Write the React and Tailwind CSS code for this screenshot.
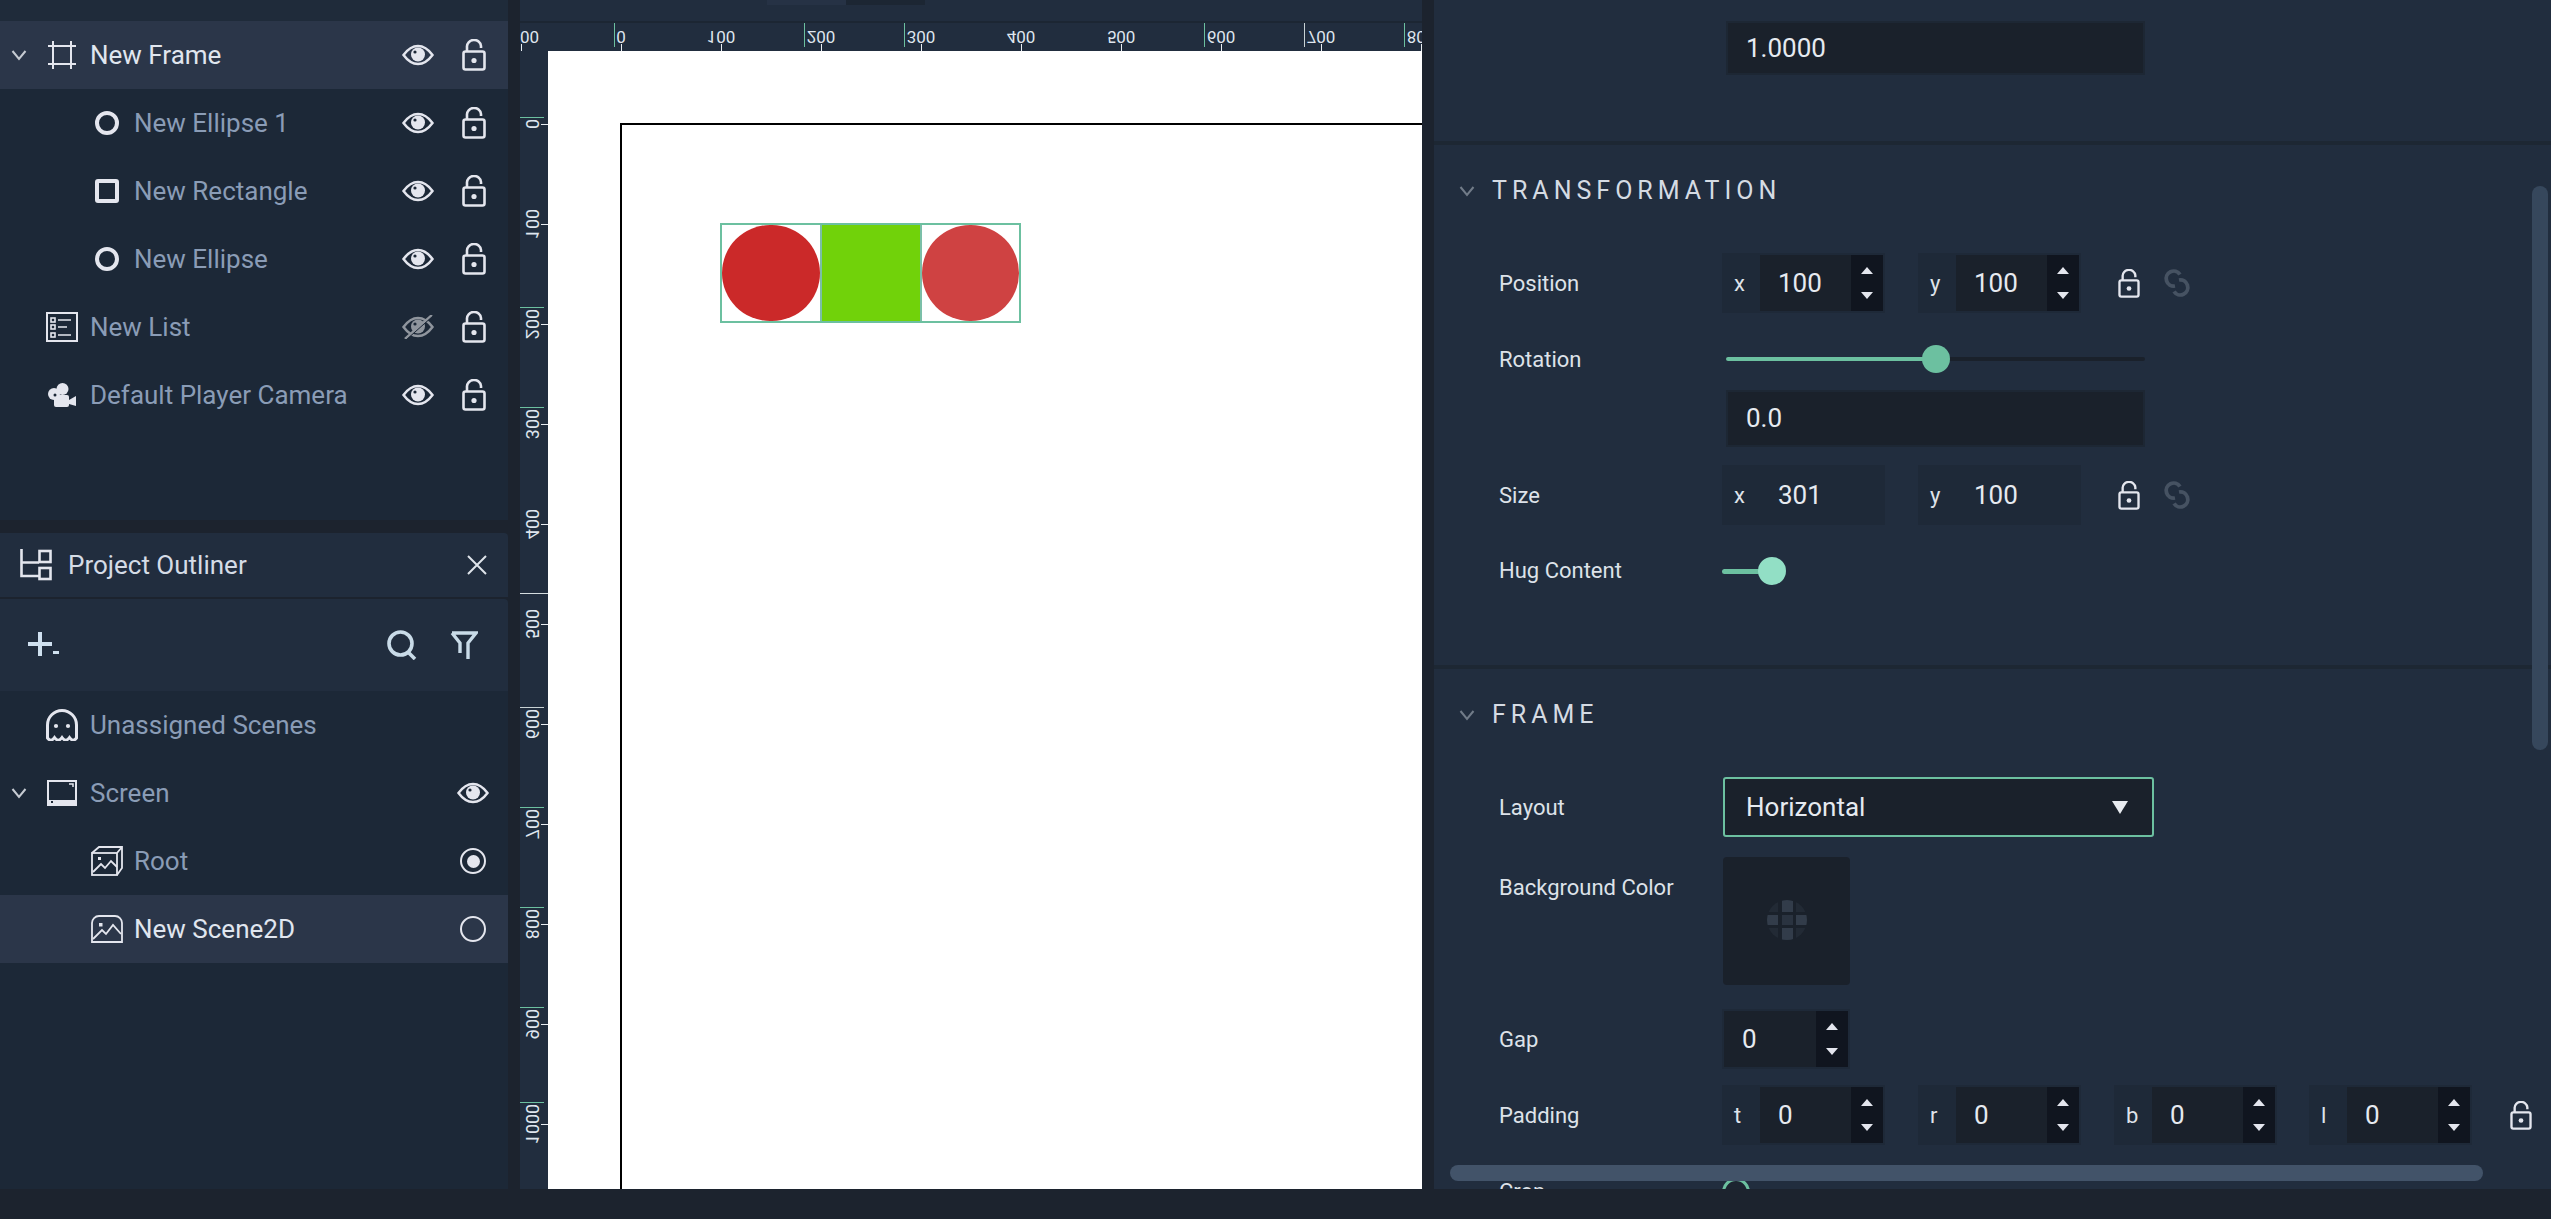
import React from 'react';

const FONT = "font-['Roboto','Noto_Sans',sans-serif]";

const Eye = ({ off }) => (
    <svg width="32" height="24" viewBox="0 0 32 24" fill="none" className={off ? 'text-[#8f959d]' : 'text-[#e4e6ee]'}>
        <path d="M1.5 12 C7 4.5 12 3 16 3 C20 3 25 4.5 30.5 12 C25 19.5 20 21 16 21 C12 21 7 19.5 1.5 12 Z" stroke="currentColor" strokeWidth="2.5" />
        <circle cx="16" cy="11.5" r="7" fill="currentColor" />
        <circle cx="13" cy="9" r="1.6" fill="#1c2837" />
        {off && <path d="M3 24 L30 0" stroke="currentColor" strokeWidth="2.5" />}
        {off && <path d="M4 25 L31 1" stroke="#1c2837" strokeWidth="1" />}
    </svg>
);

const Lock = ({ w = 24, h = 32 }) => (
    <svg width={w} height={h} viewBox="0 0 24 32" fill="none" className="text-[#e4e6ee] shrink-0">
        <rect x="1.5" y="12.5" width="21" height="18" rx="2" stroke="currentColor" strokeWidth="2.6" />
        <circle cx="12" cy="21.5" r="2.6" fill="currentColor" />
        <path d="M5 12 V8 A7 6.5 0 0 1 19 7 V9" stroke="currentColor" strokeWidth="2.6" />
    </svg>
);

const LinkIcon = () => (
    <svg width="28" height="30" viewBox="0 0 28 30" fill="none" className="text-[#465262] shrink-0 ml-[23px]">
        <path d="M17 6.5 A7.5 7.5 0 1 0 12 18" stroke="currentColor" strokeWidth="3.8" />
        <path d="M11 23.5 A7.5 7.5 0 1 0 16 12" stroke="currentColor" strokeWidth="3.8" />
    </svg>
);

const Chevron = ({ className }) => (
    <svg width="16" height="12" viewBox="0 0 16 12" fill="none" className={className}>
        <path d="M1.5 2 L8 10 L14.5 2" stroke="currentColor" strokeWidth="2" />
    </svg>
);

const FrameIcon = () => (
    <svg width="28" height="28" viewBox="0 0 28 28" fill="none" stroke="#e4e6ee" strokeWidth="2">
        <path d="M0 5 H28 M0 23 H28 M5 0 V28 M23 0 V28" />
    </svg>
);

const CircleIcon = () => <div className="w-[24px] h-[24px] rounded-full border-[4px] border-[#e4e6ee]" />;
const SquareIcon = () => <div className="w-[24px] h-[24px] rounded-[3px] border-[4px] border-[#e4e6ee]" />;

const ListIcon = () => (
    <svg width="32" height="30" viewBox="0 0 32 30" fill="none" stroke="#e4e6ee" strokeWidth="1.6">
        <rect x="1" y="1" width="30" height="28" strokeWidth="2" />
        <rect x="5" y="6" width="4" height="4" />
        <rect x="5" y="13" width="4" height="4" />
        <rect x="5" y="21" width="4" height="4" />
        <path d="M12 8 H25 M12 15 H21 M12 23 H25" />
    </svg>
);

const CameraIcon = () => (
    <svg width="28" height="24" viewBox="0 0 28 24" fill="#e4e6ee">
        <circle cx="6" cy="11" r="6" />
        <circle cx="14.5" cy="6" r="6" />
        <rect x="6" y="12" width="15" height="12" rx="2" />
        <path d="M21 17 L28 13 V23 L21 21 Z" />
        <circle cx="7" cy="12" r="1.5" fill="#1c2837" />
    </svg>
);

const GhostIcon = () => (
    <svg width="32" height="32" viewBox="0 0 32 32" fill="none" stroke="#e4e6ee" strokeWidth="3">
        <path d="M1.5 29 V16 A14.5 14.5 0 0 1 30.5 16 V29 C28 32 26 32 23.5 28.5 C21 32 18.5 32 16 28.5 C13.5 32 11 32 8.5 28.5 C6 32 4 32 1.5 29 Z" />
        <circle cx="10" cy="17" r="2.1" fill="#e4e6ee" stroke="none" />
        <circle cx="22" cy="17" r="2.1" fill="#e4e6ee" stroke="none" />
    </svg>
);

const ScreenIcon = () => (
    <svg width="30" height="26" viewBox="0 0 30 26" fill="none">
        <rect x="1" y="1" width="28" height="24" stroke="#e4e6ee" strokeWidth="2" />
        <rect x="1" y="20" width="28" height="5" fill="#e4e6ee" />
        <rect x="4" y="21" width="2" height="2" fill="#1c2837" />
        <path d="M22 4 H26 V7" stroke="#e4e6ee" strokeWidth="1.5" />
    </svg>
);

const RootIcon = () => (
    <svg width="32" height="30" viewBox="0 0 32 30" fill="none" stroke="#e4e6ee" strokeWidth="1.8">
        <rect x="1" y="7" width="25" height="22" />
        <path d="M1 7 L8 1 H31 V22 L26 29 M26 7 L31 1" />
        <path d="M2 26 L10 18 L14 22 L20 15 L26 21" />
        <rect x="7" y="11" width="3" height="3" fill="#e4e6ee" stroke="none" />
    </svg>
);

const SceneIcon = () => (
    <svg width="32" height="28" viewBox="0 0 32 28" fill="none" stroke="#e4e6ee" strokeWidth="1.8">
        <path d="M1 27 V8 A7 7 0 0 1 8 1 H24 A7 7 0 0 1 31 8 V27 Z" />
        <path d="M2 24 L11 15 L15 19 L22 10 L30 19" />
        <rect x="8" y="8" width="3.5" height="3.5" fill="#e4e6ee" stroke="none" />
    </svg>
);

const OutlinerIcon = () => (
    <svg width="32" height="32" viewBox="0 0 32 32" fill="none" stroke="#e4e6ee" strokeWidth="2.6">
        <path d="M1.5 0 V27 H19 M1.5 13.5 H19" />
        <rect x="19.5" y="2" width="11" height="11" />
        <rect x="19.5" y="19" width="11" height="11" />
    </svg>
);

const PlusIcon = () => (
    <svg width="32" height="26" viewBox="0 0 32 26" fill="#cfe0ef">
        <rect x="10" y="0" width="4" height="24" />
        <rect x="0" y="10" width="24" height="4" />
        <rect x="25" y="19" width="6" height="3" />
    </svg>
);

const SearchIcon = () => (
    <svg width="30" height="30" viewBox="0 0 30 30" fill="none" stroke="#c9dbe8" strokeWidth="3.6">
        <circle cx="13.5" cy="13.5" r="11.5" />
        <path d="M21 22 L28 29" />
    </svg>
);

const FilterIcon = () => (
    <svg width="28" height="28" viewBox="0 0 28 28" fill="none" stroke="#c9dbe8" strokeWidth="3.4">
        <path d="M2 2 H26 L18 12 V28 M2 2 L10 12 V22 M2 2" />
    </svg>
);

const TreeRow = ({ icon, label, depth = 0, open, selected, right }) => (
    <div className={`h-[68px] flex items-center text-[26px] ${selected ? 'bg-[#2b3649] text-[#e0e6ef]' : 'text-[#8a9cb6]'}`}>
        <div className="w-[46px] flex pl-[11px] shrink-0">
            {open && <Chevron className="text-[#c6cbd2]" />}
        </div>
        <div className={`flex items-center justify-center shrink-0 ${depth ? 'w-[33px] ml-[44px]' : 'w-[32px]'}`}>{icon}</div>
        <span className={depth ? 'ml-[11px]' : 'ml-[12px]'}>{label}</span>
        <div className="ml-auto flex items-center">{right}</div>
    </div>
);

const LayerActions = ({ off }) => (
    <div className="flex items-center pr-[22px] gap-[28px]">
        <Eye off={off} />
        <Lock />
    </div>
);

const RightSlot = ({ children }) => <div className="w-[68px] pr-[2px] flex justify-center">{children}</div>;

const TopRuler = () => {
    const labels = ['0', '100', '200', '300', '400', '500', '600', '700', '800'];
    const guides = [94, 284, 384, 684, 784, 884];
    return (
        <div className="relative h-[28px] bg-[#212d3e] overflow-hidden">
            {labels.map((t, i) => (
                <React.Fragment key={t}>
                    <span className="absolute top-[4px] -translate-x-1/2 -scale-y-100 text-[17px] leading-[20px] text-[#dfe5ee]" style={{ left: 101 + i * 100 }}>{t}</span>
                    <div className="absolute top-[21px] h-[7px] w-[1px] bg-[#e8edf2]" style={{ left: 101 + i * 100 }} />
                </React.Fragment>
            ))}
            <span className="absolute left-0 top-[4px] -scale-y-100 text-[17px] leading-[20px] text-[#dfe5ee]">00</span>
            <div className="absolute left-[1px] top-[21px] h-[7px] w-[1px] bg-[#e8edf2]" />
            {guides.map((x) => (
                <div key={x} className={`absolute top-0 h-[24px] w-[1px] ${x === 784 ? 'bg-[#c8d2d4]' : 'bg-[#6cc0a0]'}`} style={{ left: x }} />
            ))}
        </div>
    );
};

const SideRuler = () => {
    const labels = ['0', '100', '200', '300', '400', '500', '600', '700', '800', '900', '1000'];
    const guides = [66, 256, 356, 656, 756, 856, 956, 1051];
    return (
        <div className="relative w-[28px] bg-[#212d3e] overflow-hidden shrink-0">
            {labels.map((t, i) => (
                <React.Fragment key={t}>
                    <span className="absolute left-[12px] -translate-x-1/2 -translate-y-1/2 -rotate-90 -scale-y-100 text-[18px] leading-[20px] text-[#dfe5ee]" style={{ top: 73 + i * 100 }}>{t}</span>
                    <div className="absolute left-[21px] h-[1px] w-[7px] bg-[#e8edf2]" style={{ top: 73 + i * 100 }} />
                </React.Fragment>
            ))}
            {guides.map((y) => (
                <div key={y} className={`absolute left-0 h-[1px] w-[24px] ${y === 656 ? 'bg-[#c8d2d4]' : 'bg-[#6cc0a0]'}`} style={{ top: y }} />
            ))}
            <div className="absolute left-0 top-[542px] h-[1px] w-[28px] bg-[#d5dde0]" />
        </div>
    );
};

const Spinner = () => (
    <div className="w-[32px] bg-[#10151f] flex flex-col items-center justify-between py-[12px] shrink-0">
        <div className="w-0 h-0 border-x-[6px] border-x-transparent border-b-[7px] border-b-[#e4e6ee]" />
        <div className="w-0 h-0 border-x-[6px] border-x-transparent border-t-[7px] border-t-[#e4e6ee]" />
    </div>
);

const NumField = ({ prefix, value, spin = true, className = '' }) => (
    <div className={`h-[60px] w-[163px] bg-[#1e2938] flex p-[2px] shrink-0 text-[26px] text-[#e6eaf0] ${className}`}>
        {prefix && <div className="w-[36px] pl-[10px] flex items-center text-[22px] text-[#dfe3ea] shrink-0">{prefix}</div>}
        <div className={`flex-1 flex items-center pl-[18px] ${spin ? 'bg-[#1a212b]' : ''}`}>{value}</div>
        {spin && <Spinner />}
    </div>
);

const WideInput = ({ value, className = '' }) => (
    <div className={`w-[419px] bg-[#1a212b] border-2 border-[#1d2734] flex items-center pl-[18px] text-[26px] text-[#e6eaf0] ${className}`}>{value}</div>
);

const PropRow = ({ label, children, className = '', labelClassName = '' }) => (
    <div className={`flex items-center pl-[65px] ${className}`}>
        <div className={`w-[223px] text-[22px] text-[#dde2e9] shrink-0 ${labelClassName}`}>{label}</div>
        {children}
    </div>
);

const SectionTitle = ({ title, className = '' }) => (
    <div className={`h-[30px] flex items-center pl-[25px] ${className}`}>
        <Chevron className="text-[#717b88] shrink-0" />
        <span className="ml-[17px] text-[25px] tracking-[0.2em] text-[#d5dbe3]">{title}</span>
    </div>
);

const Swatch = () => (
    <div className="w-[127px] h-[128px] bg-[#1a212b] rounded-[4px] flex items-center justify-center">
        <svg width="40" height="40" viewBox="0 0 40 40" className="-mt-[2px]">
            <defs>
                <clipPath id="swatch-clip"><circle cx="20" cy="20" r="20" /></clipPath>
            </defs>
            <g clipPath="url(#swatch-clip)">
                <rect x="0" y="0" width="11" height="12" fill="#222a35" />
                <rect x="29" y="0" width="11" height="12" fill="#222a35" />
                <rect x="0" y="28" width="11" height="12" fill="#222a35" />
                <rect x="29" y="28" width="11" height="12" fill="#222a35" />
                <rect x="15" y="0" width="11" height="12" fill="#323c4a" />
                <rect x="15" y="28" width="11" height="12" fill="#323c4a" />
                <rect x="0" y="15" width="11" height="10" fill="#323c4a" />
                <rect x="29" y="15" width="11" height="10" fill="#323c4a" />
                <rect x="15" y="15" width="11" height="10" fill="#2a3340" />
            </g>
        </svg>
    </div>
);

const App = () => {
    return (
        <div className={`w-[2551px] h-[1219px] bg-[#1c232e] flex flex-col overflow-hidden ${FONT}`}>
            <div className="h-[1189px] flex shrink-0">
                {/* Left panels */}
                <aside className="w-[508px] flex flex-col shrink-0">
                    <div className="h-[520px] bg-[#1c2837] flex flex-col">
                        <div className="h-[21px] bg-[#1f2b3a] shrink-0" />
                        <TreeRow selected open icon={<FrameIcon />} label="New Frame" right={<LayerActions />} />
                        <TreeRow depth={1} icon={<CircleIcon />} label="New Ellipse 1" right={<LayerActions />} />
                        <TreeRow depth={1} icon={<SquareIcon />} label="New Rectangle" right={<LayerActions />} />
                        <TreeRow depth={1} icon={<CircleIcon />} label="New Ellipse" right={<LayerActions />} />
                        <TreeRow icon={<ListIcon />} label="New List" right={<LayerActions off />} />
                        <TreeRow icon={<CameraIcon />} label="Default Player Camera" right={<LayerActions />} />
                    </div>
                    <div className="mt-[13px] h-[64px] bg-[#212d3e] rounded-tr-[4px] flex items-center pl-[20px] pr-[21px]">
                        <OutlinerIcon />
                        <span className="ml-[16px] text-[26px] text-[#d5dce6]">Project Outliner</span>
                        <svg width="20" height="20" viewBox="0 0 20 20" stroke="#dfe4ea" strokeWidth="2" className="ml-auto">
                            <path d="M1 1 L19 19 M19 1 L1 19" />
                        </svg>
                    </div>
                    <div className="mt-[2px] h-[92px] bg-[#212d3e] rounded-tr-[4px] flex items-center pl-[28px] pr-[30px]">
                        <PlusIcon />
                        <div className="ml-auto"><SearchIcon /></div>
                        <div className="ml-[33px]"><FilterIcon /></div>
                    </div>
                    <div className="flex-1 bg-[#1c2837]">
                        <TreeRow icon={<GhostIcon />} label="Unassigned Scenes" />
                        <TreeRow open icon={<ScreenIcon />} label="Screen" right={<RightSlot><Eye /></RightSlot>} />
                        <TreeRow depth={1} icon={<RootIcon />} label="Root" right={
                            <RightSlot>
                                <div className="w-[26px] h-[26px] rounded-full border-[2.5px] border-[#e4e6ee] flex items-center justify-center">
                                    <div className="w-[13px] h-[13px] rounded-full bg-[#e4e6ee]" />
                                </div>
                            </RightSlot>
                        } />
                        <TreeRow selected depth={1} icon={<SceneIcon />} label="New Scene2D" right={
                            <RightSlot><div className="w-[26px] h-[26px] rounded-full border-2 border-[#e4e6ee]" /></RightSlot>
                        } />
                    </div>
                </aside>

                {/* Viewport with rulers */}
                <main className="ml-[12px] w-[902px] flex flex-col shrink-0">
                    <div className="h-[21px] bg-[#212d3e] flex items-start pl-[247px] shrink-0">
                        <div className="w-[79px] h-[5px] bg-[#263245]" />
                        <div className="w-[79px] h-[5px] bg-[#1c2633]" />
                    </div>
                    <div className="h-[2px] bg-[#1c2633] shrink-0" />
                    <TopRuler />
                    <div className="flex-1 flex min-h-0">
                        <SideRuler />
                        <div className="flex-1 relative bg-white overflow-hidden">
                            <div className="absolute left-[72px] top-[72px] w-[2000px] h-[2000px] border-[2px] border-black" />
                            <div className="absolute left-[172px] top-[172px] w-[301px] h-[100px] border-2 border-[#6cc0a0] flex">
                                <div className="w-[98px] h-full rounded-full bg-[#cb2929]" />
                                <div className="flex-1 bg-[#71d20a] border-x-[2px] border-[#7bbfa8]" />
                                <div className="w-[97px] h-full rounded-full bg-[#cf4242]" />
                            </div>
                        </div>
                    </div>
                </main>

                {/* Inspector */}
                <section className="ml-[12px] flex-1 relative bg-[#212d3e] overflow-hidden">
                    <div className="h-[141px] pt-[21px] pl-[292px]">
                        <WideInput value="1.0000" className="h-[54px]" />
                    </div>
                    <div className="h-[4px] bg-[#1d2733]" />

                    <div className="h-[520px] pt-[30px]">
                        <SectionTitle title="TRANSFORMATION" className="pt-[2px]" />
                        <PropRow label="Position" className="mt-[48px]">
                            <NumField prefix="x" value="100" />
                            <NumField prefix="y" value="100" className="ml-[33px]" />
                            <div className="ml-[37px]"><Lock w={22} h={29} /></div>
                            <LinkIcon />
                        </PropRow>
                        <PropRow label="Rotation" className="mt-[32px] h-[28px]">
                            <div className="relative ml-[4px] w-[419px] h-[4px] bg-[#1a212b] rounded-full">
                                <div className="w-[210px] h-full bg-[#6cc0a0] rounded-full" />
                                <div className="absolute left-[196px] top-[-12px] w-[28px] h-[28px] rounded-full bg-[#6cc0a0]" />
                            </div>
                        </PropRow>
                        <div className="mt-[17px] pl-[292px]">
                            <WideInput value="0.0" className="h-[57px]" />
                        </div>
                        <PropRow label="Size" className="mt-[18px]">
                            <NumField prefix="x" value="301" spin={false} />
                            <NumField prefix="y" value="100" spin={false} className="ml-[33px]" />
                            <div className="ml-[37px]"><Lock w={22} h={29} /></div>
                            <LinkIcon />
                        </PropRow>
                        <PropRow label="Hug Content" className="mt-[32px] h-[28px]" labelClassName="-mt-[2px]">
                            <div className="flex items-center">
                                <div className="w-[38px] h-[5px] bg-[#6cc0a0] rounded-full" />
                                <div className="w-[28px] h-[28px] -ml-[2px] rounded-full bg-[#92dfc5]" />
                            </div>
                        </PropRow>
                    </div>
                    <div className="h-[4px] bg-[#1d2733]" />

                    <div className="pt-[31px]">
                        <SectionTitle title="FRAME" />
                        <PropRow label="Layout" className="mt-[47px]">
                            <div className="ml-[1px] w-[431px] h-[60px] bg-[#1a212b] border-2 border-[#6cc0a0] rounded-[3px] flex items-center pl-[21px] pr-[24px] text-[26px] text-[#e6eaf0]">
                                Horizontal
                                <div className="ml-auto w-0 h-0 border-x-[8px] border-x-transparent border-t-[13px] border-t-[#e8ebf0]" />
                            </div>
                        </PropRow>
                        <PropRow label="Background Color" className="mt-[20px] !items-start" labelClassName="h-[60px] flex items-center">
                            <div className="ml-[1px]"><Swatch /></div>
                        </PropRow>
                        <PropRow label="Gap" className="mt-[24px]">
                            <NumField value="0" className="!w-[128px]" />
                        </PropRow>
                        <PropRow label="Padding" className="mt-[16px]">
                            <NumField prefix="t" value="0" />
                            <NumField prefix="r" value="0" className="ml-[33px]" />
                            <NumField prefix="b" value="0" className="ml-[33px]" />
                            <NumField prefix="l" value="0" className="ml-[32px]" />
                            <div className="ml-[38px]"><Lock w={22} h={29} /></div>
                        </PropRow>
                        <PropRow label="Crop" className="mt-[33px] h-[28px]" labelClassName="-mt-[2px]">
                            <div className="w-[28px] h-[28px] rounded-full border-[3px] border-[#6cc0a0] bg-[#1c2430]" />
                        </PropRow>
                    </div>

                    {/* Scrollbars */}
                    <div className="absolute left-[1098px] top-[186px] w-[16px] h-[564px] rounded-full bg-[#36475c]" />
                    <div className="absolute left-[16px] top-[1165px] w-[1033px] h-[16px] rounded-full bg-[#425369]" />
                </section>
            </div>
            <div className="flex-1 bg-[#1c232e]" />
        </div>
    );
};

export default App;
